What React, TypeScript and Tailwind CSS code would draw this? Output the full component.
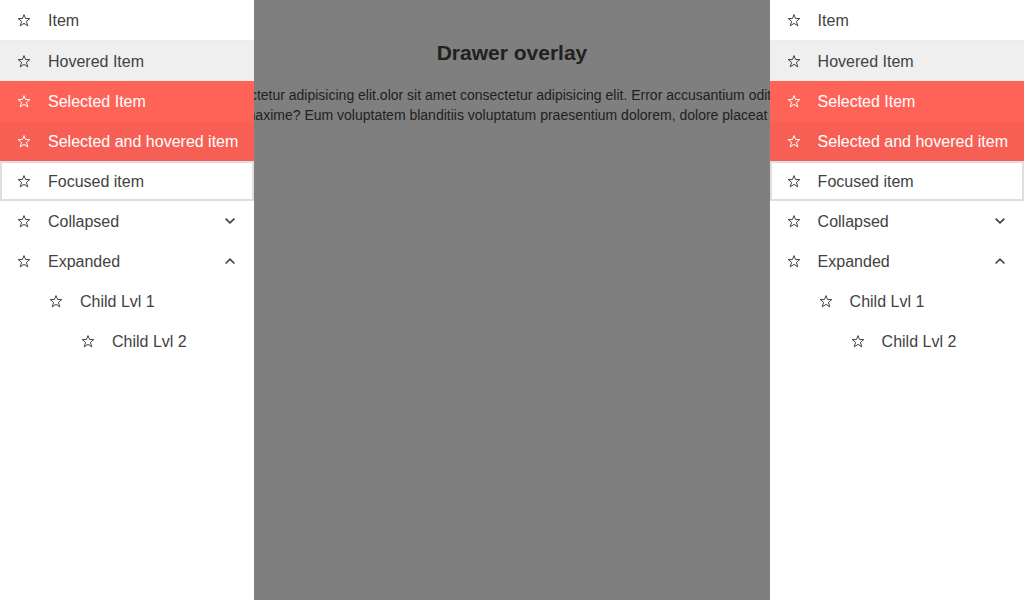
type RowState = 'normal' | 'hover' | 'selected' | 'selectedHover' | 'focus';

interface Row {
  label: string;
  state?: RowState;
  indent?: string;
  arrow?: 'down' | 'up';
  separator?: boolean;
}

const rows: Row[] = [
  { label: 'Item', separator: true },
  { label: 'Hovered Item', state: 'hover' },
  { label: 'Selected Item', state: 'selected' },
  { label: 'Selected and hovered item', state: 'selectedHover' },
  { label: 'Focused item', state: 'focus' },
  { label: 'Collapsed', arrow: 'down' },
  { label: 'Expanded', arrow: 'up' },
  { label: 'Child Lvl 1', indent: 'pl-12' },
  { label: 'Child Lvl 2', indent: 'pl-20' },
];

const stateClasses: Record<RowState, string> = {
  normal: 'text-[#424242]',
  hover: 'bg-[#efefef] text-[#424242]',
  selected: 'bg-[#ff6358] text-white',
  selectedHover: 'bg-[#f75f54] text-white',
  focus: 'text-[#424242] shadow-[inset_0_0_0_2px_rgba(0,0,0,0.13)]',
};

function Star() {
  return (
    <svg className="size-4 shrink-0" viewBox="0 0 16 16" fill="none" stroke="currentColor" strokeWidth="1">
      <path d="M8 2.6 9.5 6.5 13.8 6.6 10.4 9.4 11.8 13.9 8 11.35 4.2 13.9 5.6 9.4 2.2 6.6 6.5 6.5Z" />
    </svg>
  );
}

function Chevron({ up }: { up: boolean }) {
  return (
    <svg className="ml-auto size-4 shrink-0" viewBox="0 0 16 16" fill="none" stroke="currentColor" strokeWidth="1.65">
      <path d={up ? 'M3.6 10.5 8 6.2l4.4 4.3' : 'M3.6 5.6 8 9.9l4.4-4.3'} />
    </svg>
  );
}

function Drawer() {
  return (
    <nav className="h-full w-[254.4px] shrink-0 bg-white">
      <ul>
        {rows.map((row) => (
          <li key={row.label} className={row.separator ? 'border-b border-[#ebebeb]' : ''}>
            <div
              className={`flex h-10 items-center gap-4 pr-4 text-base leading-6 ${row.indent ?? 'pl-4'} ${stateClasses[row.state ?? 'normal']}`}
            >
              <Star />
              <span className="pt-0.5 whitespace-nowrap">{row.label}</span>
              {row.arrow && <Chevron up={row.arrow === 'up'} />}
            </div>
          </li>
        ))}
      </ul>
    </nav>
  );
}

export default function App() {
  return (
    <div className="flex h-[600px] w-[1024px] overflow-hidden bg-[#7f7f7f] font-['Liberation_Sans',Arial,sans-serif]">
      <Drawer />
      <main className="min-w-0 flex-1 overflow-hidden pt-10 text-[#212121]">
        <h1 className="text-center text-[21px] leading-[25px] font-bold">Drawer overlay</h1>
        <p className="mt-5 text-sm leading-5 whitespace-nowrap">
          <span className="-ml-[4.5px] block">
            ctetur adipisicing elit.olor sit amet consectetur adipisicing elit. Error accusantium odit
          </span>
          <span className="-ml-[10.7px] block">
            maxime? Eum voluptatem blanditiis voluptatum praesentium dolorem, dolore placeat
          </span>
        </p>
      </main>
      <Drawer />
    </div>
  );
}
